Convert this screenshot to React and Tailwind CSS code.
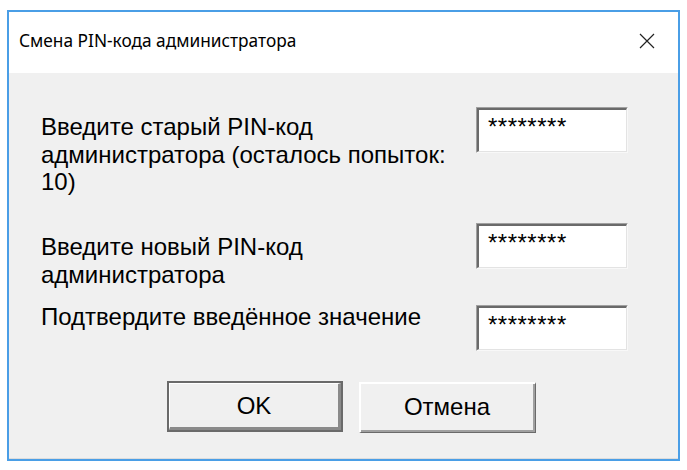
import React from "react";

const sans = { fontFamily: '"Liberation Sans", Arial, sans-serif' };

const PinField = ({ className = "" }) => (
  <div
    className={`w-[152px] h-[46px] border border-t-[#a0a0a0] border-l-[#a0a0a0] border-r-[#f8f8f8] border-b-[#f8f8f8] ${className}`}
  >
    <div className="h-full bg-white border-t-2 border-l-2 border-r border-b border-t-[#6a6a6a] border-l-[#6a6a6a] border-r-[#e3e3e3] border-b-[#e3e3e3] pl-[9px] pt-[3px] text-[24px] leading-[27.5px] tracking-[0.5px] text-black">
      ********
    </div>
  </div>
);

export default function App() {
  return (
    <div className="min-h-[470px] bg-white pt-[10px] pl-[7px]" style={sans}>
      <div className="w-[673px] h-[451px] border-2 border-[#4a9ee6] flex flex-col">
        {/* title bar */}
        <div className="h-[61px] bg-white flex items-center justify-between pl-[10px] pr-[23px] pb-[3px]">
          <span
            className="text-[17.3px] text-black"
            style={{ fontFamily: '"Noto Sans", "Open Sans", sans-serif' }}
          >
            Смена PIN-кода администратора
          </span>
          <svg width="16" height="16" viewBox="0 0 16 16" className="text-[#222]">
            <path d="M1 1 L15 15 M15 1 L1 15" stroke="currentColor" strokeWidth="1.2" fill="none" />
          </svg>
        </div>

        {/* body */}
        <div className="flex-1 bg-[#f0f0f0] border-b border-[#dcdcdc] text-[24px] leading-[27.5px] text-black">
          <div className="flex items-start mt-[34px] pl-[32px]">
            <div className="w-[435px] mt-[6px]">
              Введите старый PIN-код администратора (осталось попыток: 10)
            </div>
            <PinField />
          </div>

          <div className="flex items-start mt-[27.5px] pl-[32px]">
            <div className="w-[435px] mt-[10px]">Введите новый PIN-код администратора</div>
            <PinField />
          </div>

          <div className="flex items-start mt-[15px] pl-[32px]">
            <div className="w-[435px]">Подтвердите введённое значение</div>
            <PinField className="mt-[2px]" />
          </div>

          <div className="flex items-start gap-[16px] mt-[30px] pl-[158px]">
            <button className="w-[176px] h-[51px] border-2 border-[#6a6a6a] bg-[#f0f0f0] p-0">
              <div className="h-full flex items-center justify-center border-t border-l border-t-white border-l-white border-r-[3px] border-b-[3px] border-r-[#8a8a8a] border-b-[#8a8a8a]">
                OK
              </div>
            </button>
            <button className="w-[177px] h-[51px] mt-[1px] bg-[#f0f0f0] p-0 border-t-2 border-l-2 border-t-white border-l-white border-r border-b border-r-[#6a6a6a] border-b-[#6a6a6a]">
              <div className="h-full flex items-center justify-center border-r-2 border-b-2 border-r-[#a0a0a0] border-b-[#a0a0a0]">
                Отмена
              </div>
            </button>
          </div>
        </div>
      </div>
    </div>
  );
}
